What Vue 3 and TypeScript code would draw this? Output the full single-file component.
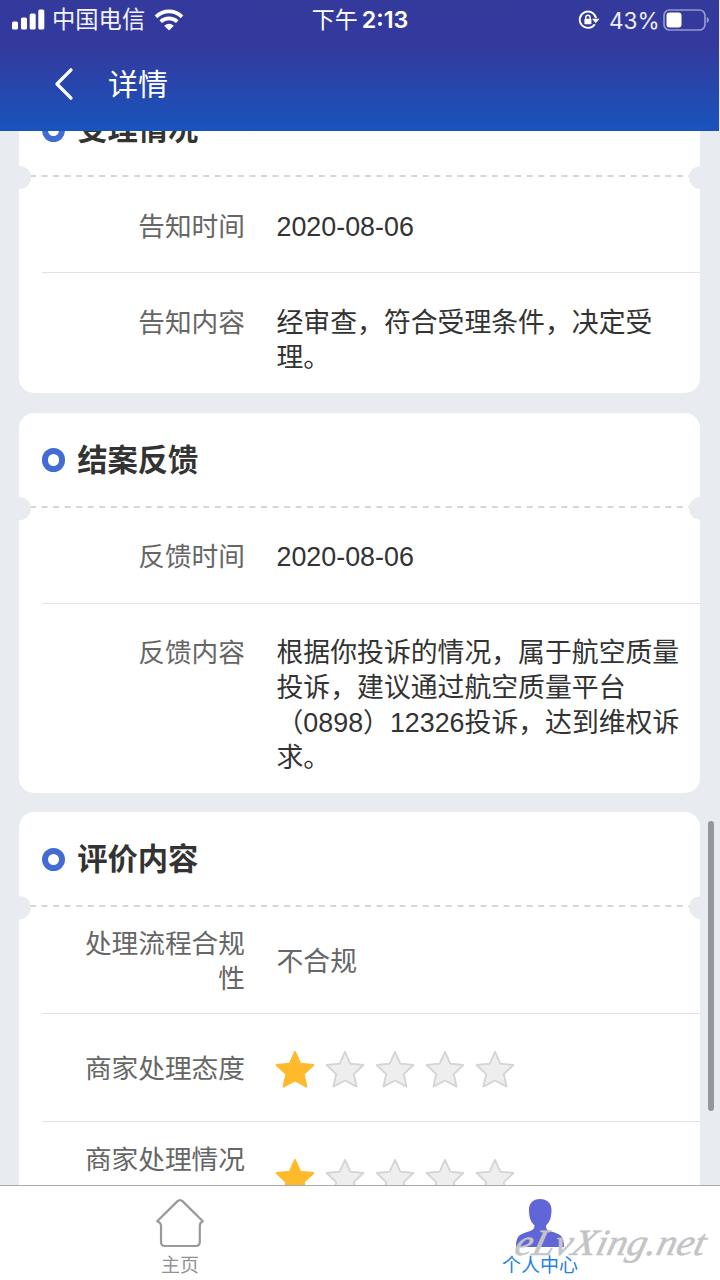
<script setup lang="ts">
interface Row {
  label: string
  value?: string
  stars?: number
  kind: string
}
interface Card {
  title: string
  rows: Row[]
}

const cards: Card[] = [
  {
    title: '受理情况',
    rows: [
      { label: '告知时间', value: '2020-08-06', kind: 'single' },
      { label: '告知内容', value: '经审查，符合受理条件，决定受理。', kind: 'multi' },
    ],
  },
  {
    title: '结案反馈',
    rows: [
      { label: '反馈时间', value: '2020-08-06', kind: 'single' },
      {
        label: '反馈内容',
        value: '根据你投诉的情况，属于航空质量投诉，建议通过航空质量平台（0898）12326投诉，达到维权诉求。',
        kind: 'multi',
      },
    ],
  },
  {
    title: '评价内容',
    rows: [
      { label: '处理流程合规性', value: '不合规', kind: 'review' },
      { label: '商家处理态度', stars: 1, kind: 'rating' },
      { label: '商家处理情况', stars: 1, kind: 'rating last' },
    ],
  },
]
</script>

<template>
  <div class="screen">
    <header class="top">
      <div class="status">
        <div class="side">
          <svg class="signal" width="33" height="21" viewBox="0 0 33 21" fill="#fff">
            <rect x="0" y="12.5" width="6" height="8" rx="1.6" />
            <rect x="9" y="8.5" width="6" height="12" rx="1.6" />
            <rect x="17.700" y="4.5" width="6" height="16" rx="1.6" />
            <rect x="26.300" y="0.5" width="6" height="20" rx="1.6" />
          </svg>
          <span class="carrier">中国电信</span>
          <svg class="wifi" width="30" height="22" viewBox="0 0 30 22" fill="none" stroke="#fff">
            <path d="M2 7.8C9.5.6 20.5.6 28 7.8" stroke-width="3.8" />
            <path d="M6.7 12.7C11.5 8.3 18.500 8.3 23.3 12.7" stroke-width="3.6" />
            <path d="M10.2 16.8Q15 12.7 19.8 16.8L15 21.5Z" fill="#fff" stroke="none" />
          </svg>
        </div>
        <div class="clock">下午<b>2:13</b></div>
        <div class="side right">
          <svg class="lock" width="22" height="20" viewBox="0 0 22 20" fill="none" stroke="#fff">
            <path d="M16.800 14.200A8.200 8.200 0 1 1 18 8.200" stroke-width="1.9" />
            <path d="M14 8.700H21.500L17.800 13.200Z" fill="#fff" stroke="none" />
            <path d="M7.7 9V7.4a2.2 2.2 0 0 1 4.4 0V9" stroke-width="1.4" />
            <rect x="6.4" y="8.800" width="7" height="5.4" rx=".8" fill="#fff" stroke="none" />
          </svg>
          <span class="percent">43%</span>
          <svg class="battery" width="47" height="22" viewBox="0 0 47 22">
            <rect x="1" y="1" width="41" height="20" rx="5.5" fill="none" stroke="#fff" stroke-opacity=".48" stroke-width="1.7" />
            <rect x="3.5" y="3.5" width="15" height="15" rx="3" fill="#fff" />
            <path d="M43.8 8Q46 9 46 11T43.8 14Z" fill="#fff" fill-opacity=".5" />
          </svg>
        </div>
      </div>
      <div class="nav">
        <svg width="20" height="34" viewBox="0 0 20 34" fill="none" stroke="#fff" stroke-width="3.3" stroke-linecap="round" stroke-linejoin="round">
          <path d="M17 2.8L3 17L17 31.2" />
        </svg>
        <h1>详情</h1>
      </div>
    </header>

    <main class="content">
      <section v-for="card in cards" :key="card.title" class="card">
        <div class="head">
          <i class="ring"></i>
          <h2>{{ card.title }}</h2>
          <svg class="dash" width="660" height="2" viewBox="0 0 660 2">
            <path d="M0 1H660" stroke="#c6c9ce" stroke-width="1.4" stroke-dasharray="6 5.55" />
          </svg>
          <i class="notch left"></i>
          <i class="notch end"></i>
        </div>
        <div v-for="row in card.rows" :key="row.label" class="row" :class="row.kind">
          <div class="label">{{ row.label }}</div>
          <div v-if="row.value" class="value">{{ row.value }}</div>
          <div v-else class="stars">
            <svg v-for="n in 5" :key="n" width="40" height="38" viewBox="0 0 40 38">
              <path
                d="M20 1.8L25.3 13.6L38.400 15L28.8 24.2L31.6 36.6L20 30.5L8.4 36.6L11.2 24.2L1.6 15L14.7 13.6Z"
                :fill="n <= (row.stars ?? 0) ? '#ffba2c' : '#eeeeee'"
                :stroke="n <= (row.stars ?? 0) ? '#ffba2c' : '#d4d4d4'"
                stroke-width="1.8"
                stroke-linejoin="round"
              />
            </svg>
          </div>
        </div>
      </section>
      <i class="scrollbar"></i>
    </main>

    <footer class="tabs">
      <div class="tab">
        <svg width="50" height="50" viewBox="0 0 50 50" fill="none" stroke="#999" stroke-width="2.2" stroke-linejoin="round">
          <path d="M22.3 3.4Q25 .9 27.7 3.4L47.8 23.2Q44.8 24.5 44.8 28V44Q44.800 48 40.8 48H10Q6 48 6 44V28Q6 24.5 2.2 23.2Z" />
        </svg>
        <span>主页</span>
      </div>
      <div class="tab active">
        <svg width="50" height="50" viewBox="0 0 50 50" fill="#6065d8">
          <path d="M25 1C32 1 36.5 5 36.5 12C36.5 19 35 23.5 31 27.5C31 32 33 32.5 38 34C46 36.3 49 39 49 49H1C1 39 4 36.3 12 34C17 32.5 19.5 31.5 19.5 27.5C15.5 23.5 14 19 14 12C14 5 18 1 25 1Z" />
        </svg>
        <span>个人中心</span>
      </div>
      <svg class="mark" width="210" height="60" viewBox="0 0 210 60">
        <text x="4" y="36" textLength="190" lengthAdjust="spacingAndGlyphs" transform="skewX(-14) translate(8 0)">eLvXing.net</text>
      </svg>
    </footer>
  </div>
</template>

<style>
html,
body {
  overflow: hidden;
}
</style>

<style scoped>
.screen {
  width: 720px;
  height: 1280px;
  display: flex;
  flex-direction: column;
  overflow: hidden;
  background: #e8ebf0;
  font-family: 'Liberation Sans', 'Noto Sans CJK SC', sans-serif;
  color: #333;
}
.top {
  flex: none;
  width: 719px;
  height: 130.5px;
  background: linear-gradient(#343a9c 0, #343a9d 35%, #1854bd 100%);
  color: #fff;
}
.status {
  height: 40px;
  display: grid;
  grid-template-columns: 260px 200px 1fr;
  align-items: center;
}
.side {
  display: flex;
  align-items: center;
  height: 40px;
  padding-left: 12px;
}
.signal {
  margin-top: -2px;
}
.carrier {
  margin-left: 7px;
  font-size: 23.3px;
  line-height: 40px;
  color: #f3f3fc;
}
.wifi {
  margin-left: 9px;
}
.clock {
  text-align: center;
  font-family: Inter, 'Noto Sans CJK SC', sans-serif;
  font-size: 23px;
  line-height: 40px;
  white-space: nowrap;
}
.clock b {
  font-weight: 600;
  font-size: 23.3px;
  margin-left: 4px;
}
.right {
  padding-left: 118px;
}
.percent {
  margin-left: 9px;
  width: 54px;
  font-family: Inter, sans-serif;
  font-size: 22.6px;
  color: #eeeefa;
}
.battery {
  flex: none;
}
.nav {
  display: flex;
  align-items: center;
  height: 88px;
  padding-left: 54px;
}
.nav h1 {
  margin: 1px 0 0 34px;
  font-size: 30px;
  font-weight: 400;
  line-height: 44px;
}
.content {
  position: relative;
  flex: 1;
  min-height: 0;
  overflow: hidden;
  padding: 0 19px;
}
.card {
  width: 681.4px;
  margin-bottom: 19.4px;
  background: #fff;
  border-radius: 15px;
  overflow: hidden;
}
.card:first-child {
  margin-top: -48.1px;
}
.head {
  position: relative;
  height: 95px;
  display: flex;
  align-items: center;
  padding-left: 22.7px;
  box-sizing: border-box;
}
.ring {
  width: 11.5px;
  height: 11.5px;
  border: 6px solid #426bd3;
  border-radius: 50%;
}
.head h2 {
  margin: 1px 0 0 12px;
  font-size: 30.3px;
  line-height: 44px;
  font-weight: 700;
}
.dash {
  position: absolute;
  left: 11px;
  bottom: 0;
}
.notch {
  position: absolute;
  bottom: -12px;
  width: 23px;
  height: 23px;
  border-radius: 50%;
  background: #e8ebf0;
  z-index: 1;
}
.left {
  left: -11.5px;
}
.end {
  right: -11.5px;
}
.row {
  display: flex;
  align-items: center;
  margin-left: 23px;
  font-size: 26.85px;
  line-height: 34.7px;
  box-sizing: border-box;
  border-bottom: 1.5px solid #e2e2e4;
}
.row:last-child {
  border-bottom: 0;
}
.label {
  flex: none;
  width: 203px;
  box-sizing: border-box;
  padding-left: 40px;
  text-align: right;
  font-size: 26.7px;
  color: #666;
}
.value {
  width: 406px;
  margin-left: 31.5px;
}
.single {
  height: 96px;
  padding-top: 4px;
}
.multi {
  align-items: flex-start;
  padding: 32.9px 0 17.5px;
}
.review {
  height: 107px;
  padding-top: 4px;
}
.review .value {
  color: #666;
}
.rating {
  height: 107.5px;
  padding-top: 4px;
}
.last {
  align-items: flex-start;
  padding-top: 21px;
}
.last .stars {
  margin-top: 15px;
}
.stars {
  display: flex;
  gap: 9.9px;
  margin-left: 30px;
}
.scrollbar {
  position: absolute;
  top: 690px;
  right: 6px;
  width: 6px;
  height: 290px;
  border-radius: 3px;
  background: #93989c;
}
.tabs {
  position: relative;
  flex: none;
  height: 95px;
  box-sizing: border-box;
  border-top: 1px solid #aaa;
  background: #fff;
  display: grid;
  grid-template-columns: 1fr 1fr;
}
.tab {
  display: flex;
  flex-direction: column;
  align-items: center;
  padding-top: 12px;
  font-size: 19px;
  line-height: 28px;
  color: #929292;
}
.tab span {
  margin-top: 4px;
}
.active {
  color: #1f83df;
}
.mark {
  position: absolute;
  right: 0;
  top: 33px;
}
.mark text {
  font: italic 37px 'Liberation Serif', serif;
  fill: #c4c4c6;
  stroke: #c4c4c6;
  stroke-width: 0.5px;
}
</style>
